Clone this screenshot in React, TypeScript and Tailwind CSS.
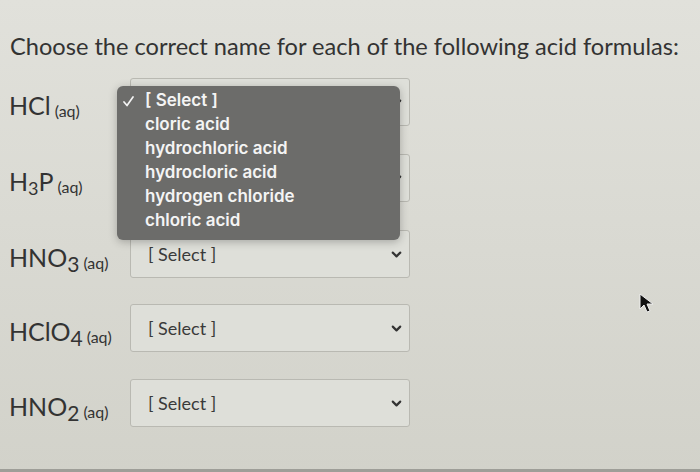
import { ChevronDown } from 'lucide-react';

const rows = [
  { formula: <>HCl</>, top: 'mt-[78px]', hidden: true },
  { formula: <>H<sub className="text-[18px] -bottom-[4px]">3</sub>P</>, top: 'mt-[28px]', hidden: true },
  { formula: <>HNO<sub className="text-[21px] -bottom-[5px]">3</sub></>, top: 'mt-[28px]', hidden: false },
  { formula: <>HClO<sub className="text-[21px] -bottom-[5px]">4</sub></>, top: 'mt-[26px]', hidden: false },
  { formula: <>HNO<sub className="text-[21px] -bottom-[5px]">2</sub></>, top: 'mt-[27px]', hidden: false },
];

const options = ['cloric acid', 'hydrochloric acid', 'hydrocloric acid', 'hydrogen chloride', 'chloric acid'];

const Cursor = () => (
  <svg width="18" height="22" viewBox="0 0 18 22" className="absolute left-[638px] top-[292px]">
    <path d="M2 2 L2 17 L6 13 L9 20 L12 19 L9 12 L15 12 Z" fill="#111" stroke="#eee" strokeWidth="1" strokeLinejoin="round" />
  </svg>
);

const App = () => {
  return (
    <div className="relative w-[700px] h-[472px] overflow-hidden bg-linear-to-b from-[#e1e1db] to-[#d2d2ca] text-[#333] font-['Lato','Open_Sans',sans-serif]">
      <div className="absolute top-0 left-0 w-full">
        <p className="pl-[10px] pt-[30px] text-[23.6px] leading-[32px]">Choose the correct name for each of the following acid formulas:</p>
      </div>

      <div className="flex flex-col">
        {rows.map((row, i) => (
          <div key={i} className={`flex items-start ${row.top}`}>
            <div className="w-[130px] pl-[9px] pt-[12px] whitespace-nowrap">
              <span className="text-[25px] leading-[30px]">{row.formula}</span>
              <span className="text-[16px] ml-[4px] relative top-[2px]">(aq)</span>
            </div>
            <div className="flex items-center justify-between w-[280px] h-[48px] border border-[#b9b9b2] rounded-[3px] bg-[#dedfd9] pl-[17px] pr-[5px]">
              <span className={`text-[18px] text-[#3a3a3a] ${row.hidden ? 'invisible' : ''}`}>[ Select ]</span>
              <ChevronDown size={15} strokeWidth={3.4} className="text-[#333]" />
            </div>
          </div>
        ))}
      </div>

      <div className="absolute left-[117px] top-[86px] w-[283px] h-[154px] rounded-[6px] bg-[#6c6c6a] shadow-[0_2px_8px_rgba(0,0,0,0.25)] pt-[3px] font-['Inter',sans-serif] text-[#f4f4f4] text-[17px] font-semibold">
        <div className="flex items-center h-[24px]">
          <span className="w-[28px] pl-[6px] flex items-center">
            <svg width="11" height="11" viewBox="0 0 11 11">
              <path d="M1 6 L4 9.5 L10 1" fill="none" stroke="#f4f4f4" strokeWidth="1.7" strokeLinecap="round" strokeLinejoin="round" />
            </svg>
          </span>
          <span>[ Select ]</span>
        </div>
        {options.map((o) => (
          <div key={o} className="h-[24px] flex items-center pl-[28px]">
            {o}
          </div>
        ))}
      </div>

      <Cursor />
      <div className="absolute bottom-0 left-0 w-full h-[3px] bg-[#9e9e98]" />
    </div>
  );
};

export default App;
